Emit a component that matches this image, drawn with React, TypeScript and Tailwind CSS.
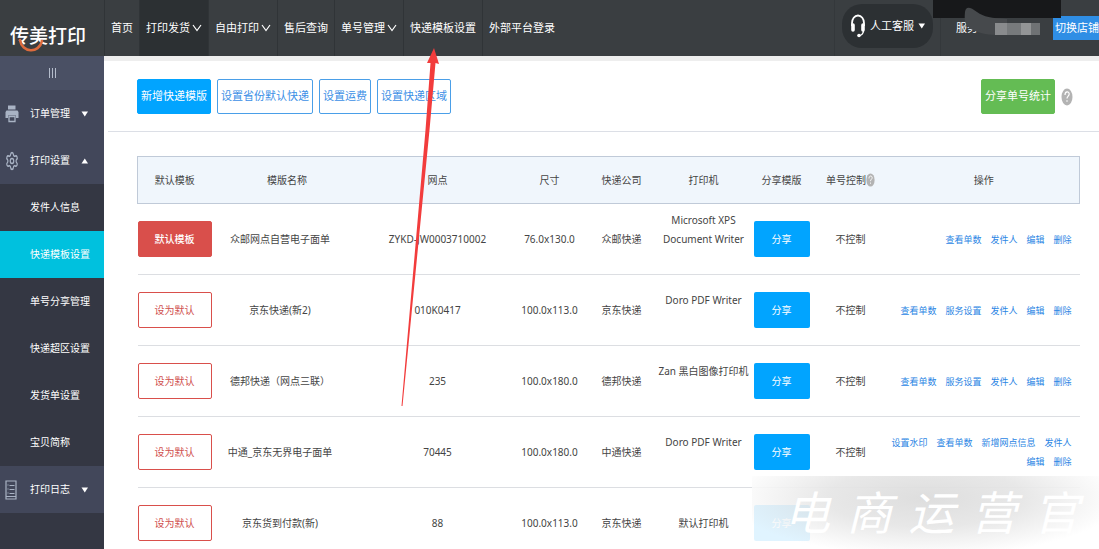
import React from 'react';
import { Settings } from 'lucide-react';

interface NavItem {
  label: string;
  menu?: boolean;
  active?: boolean;
}

interface Template {
  name: string;
  site: string;
  size: string;
  company: string;
  printer: string;
  printerNote?: boolean;
  isDefault?: boolean;
  actions: string[];
}

const navItems: NavItem[] = [
  { label: '首页' },
  { label: '打印发货', menu: true, active: true },
  { label: '自由打印', menu: true },
  { label: '售后查询' },
  { label: '单号管理', menu: true },
  { label: '快递模板设置' },
  { label: '外部平台登录' },
];

const settingsItems = ['发件人信息', '快递模板设置', '单号分享管理', '快递超区设置', '发货单设置', '宝贝简称'];

const templates: Template[] = [
  {
    name: '众邮网点自营电子面单',
    site: 'ZYKD-JW0003710002',
    size: '76.0x130.0',
    company: '众邮快递',
    printer: 'Microsoft XPS Document Writer',
    printerNote: true,
    isDefault: true,
    actions: ['查看单数', '发件人', '编辑', '删除'],
  },
  {
    name: '京东快递(新2)',
    site: '010K0417',
    size: '100.0x113.0',
    company: '京东快递',
    printer: 'Doro PDF Writer',
    printerNote: true,
    actions: ['查看单数', '服务设置', '发件人', '编辑', '删除'],
  },
  {
    name: '德邦快递（网点三联）',
    site: '235',
    size: '100.0x180.0',
    company: '德邦快递',
    printer: 'Zan 黑白图像打印机',
    printerNote: true,
    actions: ['查看单数', '服务设置', '发件人', '编辑', '删除'],
  },
  {
    name: '中通_京东无界电子面单',
    site: '70445',
    size: '100.0x180.0',
    company: '中通快递',
    printer: 'Doro PDF Writer',
    printerNote: true,
    actions: ['设置水印', '查看单数', '新增网点信息', '发件人', '编辑', '删除'],
  },
  {
    name: '京东货到付款(新)',
    site: '88',
    size: '100.0x113.0',
    company: '京东快递',
    printer: '默认打印机',
    actions: [],
  },
];

function HelpIcon({ className }: { className: string }) {
  return (
    <svg viewBox="0 0 12 18" preserveAspectRatio="none" className={className} aria-hidden="true">
      <ellipse cx="6" cy="9" rx="5.5" ry="8.5" fill="#b3b3b3" />
      <path d="M4 7c0-4 4.200-4 4.200-1 0 2-2.200 2.200-2.200 4.500M6 12.300v1.500" fill="none" stroke="#fff" strokeWidth="1.200" />
    </svg>
  );
}

function Caret({ up }: { up?: boolean }) {
  return (
    <svg viewBox="0 0 8 6" className="h-1.5 w-2 shrink-0" fill="#fff" aria-hidden="true">
      <path d={up ? 'M0.500 5.500h6.500L3.800 0.500z' : 'M0.500 0.500h6.500L3.800 5.500z'} />
    </svg>
  );
}

function MenuChevron() {
  return (
    <svg viewBox="0 0 10 8" className="h-2 w-2.5 shrink-0" fill="none" stroke="#fff" aria-hidden="true">
      <path d="M1 1l4 5.500L9 1" strokeWidth="1.200" />
    </svg>
  );
}

function PrinterIcon() {
  return (
    <svg viewBox="0 0 14 18" className="h-[18px] w-3.5" fill="#a9b3c4" aria-hidden="true">
      <path d="M3 0.500h7.500v4H3z" />
      <path d="M1.500 5.500h11l1 1.500v6h-2.500v-2.500H3V13H0.500V7z" />
      <path d="M4 11.500h6v5H4z" fill="none" stroke="#a9b3c4" strokeWidth="1.300" />
    </svg>
  );
}

function LogIcon() {
  return (
    <svg viewBox="0 0 12 20" className="h-5 w-3" fill="none" stroke="#a9b3c4" strokeWidth="1.200" aria-hidden="true">
      <path d="M1 1h10v18H1z" />
      <path d="M2.500 5h1M4.500 5.500h5M2.500 9h1M4.500 9.500h5M2.500 13h1M4.500 13.500h5M1 16.500h10" />
    </svg>
  );
}

function HeadsetIcon() {
  return (
    <svg viewBox="0 0 16 24" className="h-6 w-4 shrink-0" fill="none" stroke="#fff" aria-hidden="true">
      <path d="M2 12V9c0-4 2.500-7.500 6-7.500S14 5 14 9v3" strokeWidth="1.800" />
      <path d="M3 11v5M13 11v5" strokeWidth="3.600" strokeLinecap="round" />
      <path d="M13.500 17c-.5 3-2 4.500-4.500 4.500" strokeWidth="1.500" />
      <circle cx="9" cy="21.500" r="1.800" fill="#fff" stroke="none" />
    </svg>
  );
}

function Logo() {
  return (
    <div className="relative flex w-[104px] shrink-0 items-center pt-4 pl-2.5 text-[19px] font-medium text-white">
      传美打印
      <svg viewBox="0 0 26 14" className="absolute top-[38px] left-[18px] h-3.5 w-[26px]" fill="none" aria-hidden="true">
        <path d="M2 2c2 13 19 14 22 1" stroke="#dd6b3d" strokeWidth="2.600" strokeLinecap="round" />
      </svg>
    </div>
  );
}

function Header() {
  return (
    <header className="relative flex h-14 shrink-0 overflow-hidden bg-[#3a3e41] text-[11px] text-white">
      <Logo />
      <nav className="flex">
        {navItems.map((item) => (
          <a
            key={item.label}
            href="#"
            className={`flex items-center gap-0.5 border-l border-[#303437] px-1.5 whitespace-nowrap ${
              item.active ? 'bg-[#2c3033]' : ''
            }`}
          >
            {item.label}
            {item.menu && <MenuChevron />}
          </a>
        ))}
      </nav>
      <div className="ml-auto flex shrink-0">
        <div className="border-x border-[#34383b] px-[7px] pt-1">
          <button className="flex h-11 w-[91px] items-center gap-1 rounded-[20px] bg-[#2c3033] pl-2 whitespace-nowrap">
            <HeadsetIcon />
            人工客服
            <Caret />
          </button>
        </div>
        <div className="flex w-[158px] items-center overflow-hidden pl-[15px] whitespace-nowrap">
          <span className="w-[101px]">服务</span>
          <a href="#" className="flex h-6 shrink-0 items-center bg-[#2f8ee5] pl-0.5">
            切换店铺
          </a>
        </div>
      </div>
      {/* masked account name */}
      <svg viewBox="0 0 130 40" className="absolute top-0 right-9 h-10 w-[130px]" aria-hidden="true">
        <path d="M0 0h128v18H0z" fill="#17181a" />
        <path d="M32 12c1-6 5-5 12 0s14 6 30 7v16c-16 0-22 0-32-4s-11-9-10-19z" fill="#46494c" />
        <path d="M62 23h12v12H62z" fill="#898b8d" />
        <path d="M74 23h14v12H74z" fill="#777a7c" />
        <path d="M88 23h10v12H88z" fill="#939596" />
        <path d="M98 23h9v12h-9z" fill="#6f7274" />
      </svg>
    </header>
  );
}

function MenuHeading({ icon, label, open }: { icon: React.ReactNode; label: string; open?: boolean }) {
  return (
    <button className="flex h-[47px] w-full items-center bg-[#42475a] pl-[5px] text-left">
      <span className="w-[25px]">{icon}</span>
      <span className="w-[51px]">{label}</span>
      <Caret up={open} />
    </button>
  );
}

function Sidebar() {
  return (
    <aside className="w-[104px] shrink-0 bg-[#343743] text-[10px] text-white">
      <button aria-label="收起菜单" className="flex h-[34px] w-full items-center justify-center gap-0.5 bg-[#4a5064]">
        <span className="h-2.5 w-px bg-[#b4bccb]" />
        <span className="h-2.5 w-px bg-[#b4bccb]" />
        <span className="h-2.5 w-px bg-[#b4bccb]" />
      </button>
      <MenuHeading icon={<PrinterIcon />} label="订单管理" />
      <MenuHeading
        icon={<Settings className="h-5 w-3.5 text-[#a9b3c4]" preserveAspectRatio="none" strokeWidth={2} />}
        label="打印设置"
        open
      />
      {settingsItems.map((item) => (
        <a
          key={item}
          href="#"
          className={`flex h-[47px] items-center pl-[30px] ${item === '快递模板设置' ? 'bg-[#00c1de]' : ''}`}
        >
          {item}
        </a>
      ))}
      <MenuHeading icon={<LogIcon />} label="打印日志" />
    </aside>
  );
}

function Toolbar() {
  return (
    <div className="ml-1 flex items-center gap-1.5 border-b border-[#dcdfe6] pt-[18px] pr-[26px] pb-[17px] pl-[29px] text-[11px] whitespace-nowrap">
      <button className="h-[35px] rounded-xs border border-[#01a4ff] bg-[#01a4ff] px-[3px] text-white">新增快递模版</button>
      {['设置省份默认快递', '设置运费', '设置快递区域'].map((label) => (
        <button key={label} className="h-[35px] rounded-xs border border-[#4a9fe8] px-[3px] text-[#3c8fe6]">
          {label}
        </button>
      ))}
      <button className="ml-auto h-[35px] rounded-xs border border-[#64bc54] bg-[#64bc54] px-[3px] text-white">分享单号统计</button>
      <HelpIcon className="h-[18px] w-3" />
    </div>
  );
}

function TemplateRow({ row }: { row: Template }) {
  return (
    <tr className="h-[71px] border-b border-[#dcdee2]">
      <td>
        <button
          className={`h-9 w-full rounded-xs border border-[#d94f4b] ${
            row.isDefault ? 'bg-[#d94f4b] font-medium text-white' : 'text-[#d0504e]'
          }`}
        >
          {row.isDefault ? '默认模板' : '设为默认'}
        </button>
      </td>
      <td className="pr-3.5">{row.name}</td>
      <td>{row.site}</td>
      <td>{row.size}</td>
      <td>{row.company}</td>
      <td className={row.printerNote ? 'px-1 pb-[19px] has-[span]:px-0' : ''}>
        {row.printer.startsWith('Zan') ? <span className="whitespace-nowrap">{row.printer}</span> : row.printer}
      </td>
      <td>
        <button className="h-9 w-14 rounded-xs bg-[#01a4ff] text-white">分享</button>
      </td>
      <td>{row.actions.length > 0 && '不控制'}</td>
      <td className="pr-2 text-right text-[9px] text-[#2b85e4]">
        <div className="flex flex-wrap justify-end gap-x-[9px]">
          {row.actions.map((action) => (
            <a key={action} href="#" className="whitespace-nowrap">
              {action}
            </a>
          ))}
        </div>
      </td>
    </tr>
  );
}

function TemplateTable() {
  return (
    <table className="w-full table-fixed border-collapse text-center text-[10px] leading-[19px] text-[#444]">
      <colgroup>
        <col className="w-[74px]" />
        <col className="w-[151px]" />
        <col className="w-[150px]" />
        <col className="w-[74px]" />
        <col className="w-[70px]" />
        <col className="w-[94px]" />
        <col className="w-[62px]" />
        <col className="w-[76px]" />
        <col className="w-[191px]" />
      </colgroup>
      <thead>
        <tr className="h-[47px] border border-[#c0cad8] bg-[#f0f6fc] [&>th]:font-normal">
          <th>默认模板</th>
          <th>模版名称</th>
          <th>网点</th>
          <th>尺寸</th>
          <th>快递公司</th>
          <th>打印机</th>
          <th>分享模版</th>
          <th>
            <span className="flex items-center justify-center">
              单号控制
              <HelpIcon className="h-3.5 w-[9px]" />
            </span>
          </th>
          <th>操作</th>
        </tr>
      </thead>
      <tbody>
        {templates.map((row) => (
          <TemplateRow key={row.name} row={row} />
        ))}
      </tbody>
    </table>
  );
}

function Watermark() {
  return (
    <div className="pointer-events-none absolute right-0 bottom-0 flex h-[73px] w-[347px] items-center justify-between bg-[radial-gradient(ellipse_at_50%_30%,#dcdcdcf2_0%,#e6e6e6ee_40%,#ffffffe0_80%)] pr-5 pl-8 text-[46px] text-white italic">
      {['电', '商', '运', '营', '官'].map((char) => (
        <span key={char}>{char}</span>
      ))}
    </div>
  );
}

function PointerArrow() {
  return (
    <svg viewBox="0 0 40 360" className="pointer-events-none absolute top-[48px] left-[400px] h-[360px] w-10" fill="#f23c3c" aria-hidden="true">
      <path d="M34 0l5 16-3.500-1L29.500 82 2.500 358H1.500L25.500 82 30.500 15l-3.500 0z" />
    </svg>
  );
}

export default function App() {
  return (
    <div className="relative flex h-screen flex-col overflow-hidden bg-white font-['Noto_Sans','Noto_Sans_CJK_SC',sans-serif]">
      <Header />
      <div className="flex min-h-0 flex-1">
        <Sidebar />
        <main className="min-w-0 flex-1 border-t-[5px] border-[#eeeeee]">
          <Toolbar />
          <div className="pt-6 pr-5 pl-[33px]">
            <TemplateTable />
          </div>
        </main>
      </div>
      <Watermark />
      <PointerArrow />
    </div>
  );
}
